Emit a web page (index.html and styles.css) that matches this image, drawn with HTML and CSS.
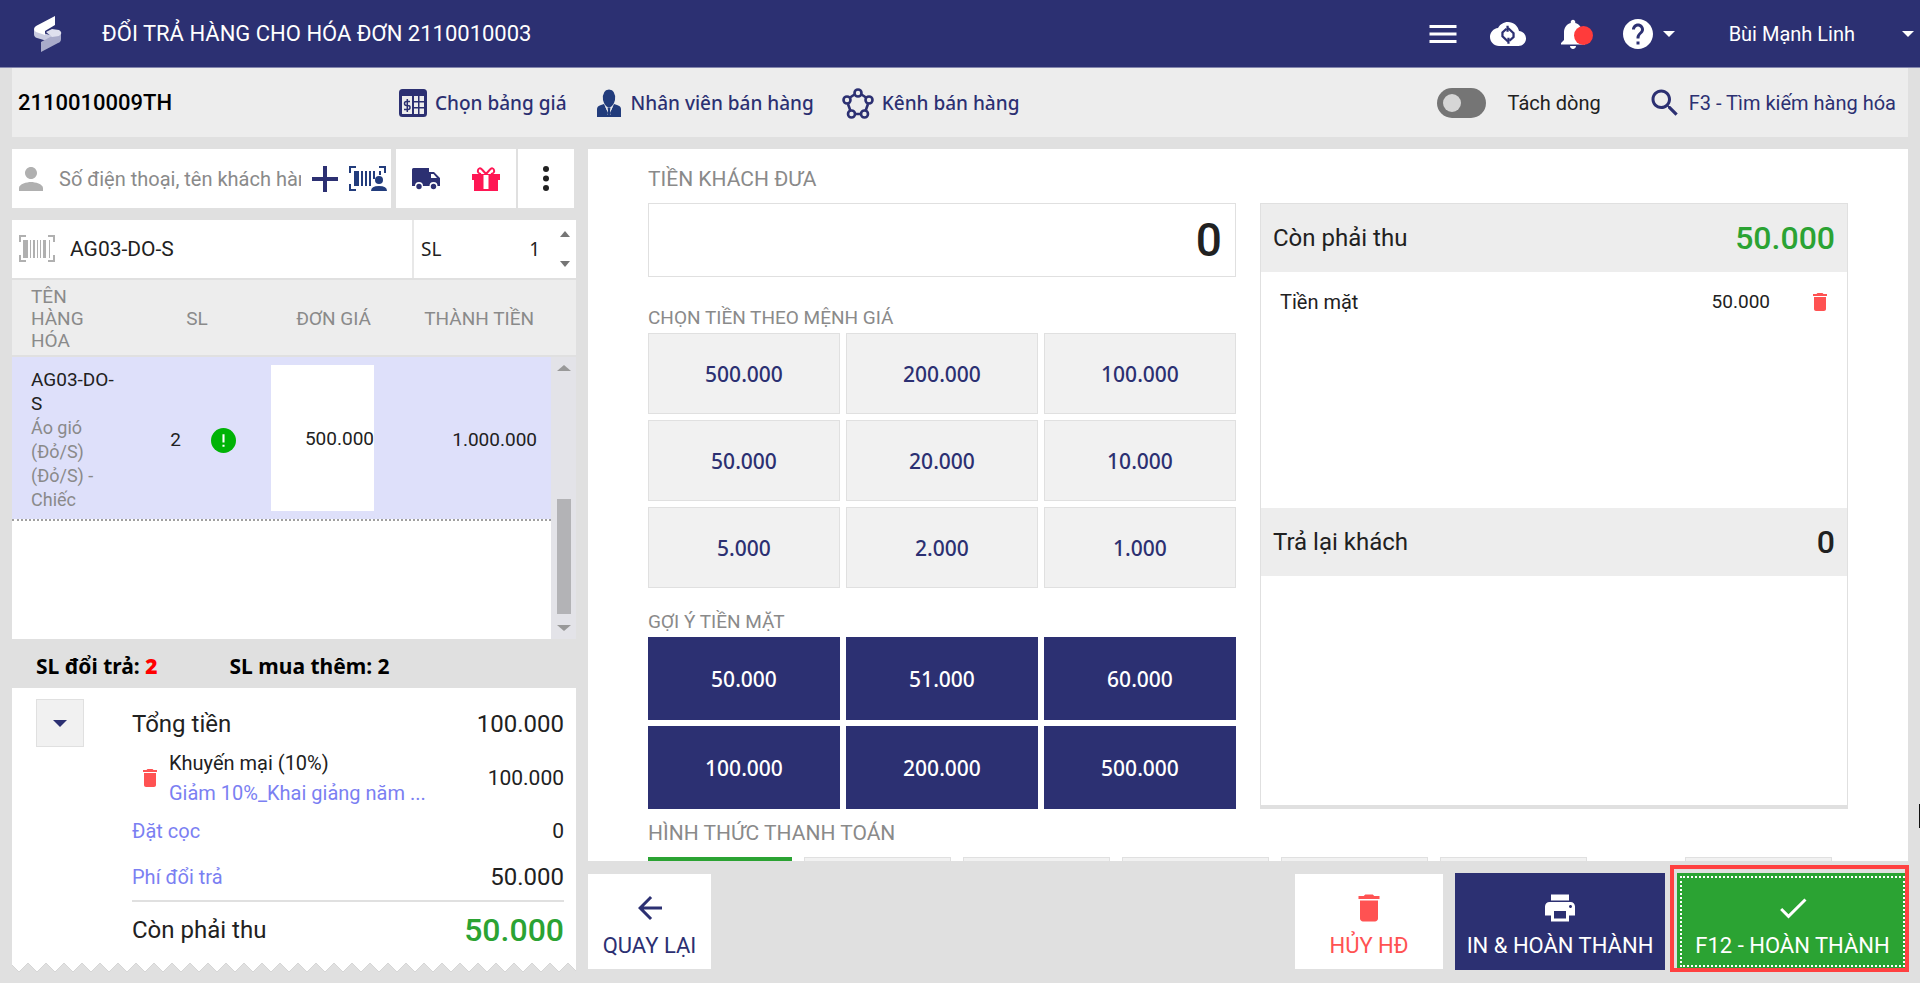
FILE: index.html
```html
<!DOCTYPE html>
<html lang="vi">
<head>
    <meta charset="UTF-8">
    <meta name="viewport" content="width=device-width, initial-scale=1.0">
    <title>Đổi trả hàng</title>
    <link rel="stylesheet" href="styles.css">
</head>
<body>
    <header class="topbar">
        <svg class="logo" viewBox="0 0 28 36">
            <path d="M0 13v5q0 3 3 4l10 3 6-5-10-3z" fill="#c9cbe0"/>
            <path d="M21 0v9l-10 6v4L2 16q-4-3 0-6z" fill="#fff"/>
            <path d="M27 16v7q0 3-3 4L7 36V26l11-6z" fill="#a9abca"/>
            <path d="M12 16l6-3 7 1q3 2 2 4l-2 2-7 1z" fill="#dfe0ee"/>
        </svg>
        <h1>ĐỔI TRẢ HÀNG CHO HÓA ĐƠN 2110010003</h1>
        <div class="topbar-right">
            <button class="icon-btn" aria-label="Menu">
                <svg class="icon" viewBox="0 0 24 24"><path d="M3 18h18v-2H3v2zm0-5h18v-2H3v2zm0-7v2h18V6H3z"/></svg>
            </button>
            <button class="icon-btn" aria-label="Đồng bộ">
                <svg class="icon" viewBox="0 0 24 24">
                    <path d="M19.35 10.04C18.67 6.59 15.64 4 12 4 9.11 4 6.6 5.64 5.35 8.04 2.34 8.36 0 10.91 0 14c0 3.31 2.69 6 6 6h13c2.76 0 5-2.24 5-5 0-2.64-2.05-4.78-4.65-4.96z"/>
                    <g fill="none" stroke="#2c3072" stroke-width="1.5"><path d="M11 8.500L8.300 11v2.500L12 17M13 16.500l2.700-2.500v-2.500L12 8"/><path d="M11.700 6.500v4M12.300 14.500v4"/></g>
                </svg>
            </button>
            <button class="icon-btn bell" aria-label="Thông báo">
                <svg class="icon" viewBox="0 0 24 24"><path d="M12 22c1.100 0 2-.9 2-2h-4c0 1.100.9 2 2 2zm6-6v-5c0-3.070-1.640-5.640-4.500-6.320V4c0-.83-.67-1.500-1.500-1.500s-1.500.67-1.500 1.500v.68C7.630 5.360 6 7.920 6 11v5l-2 2v1h16v-1l-2-2z"/></svg>
                <span class="dot"></span>
            </button>
            <button class="icon-btn" aria-label="Trợ giúp">
                <svg class="icon" viewBox="0 0 24 24"><path d="M12 2C6.480 2 2 6.480 2 12s4.480 10 10 10 10-4.480 10-10S17.520 2 12 2zm1 17h-2v-2h2v2zm2.070-7.750l-.9.920C13.450 12.900 13 13.500 13 15h-2v-.5c0-1.100.45-2.100 1.170-2.830l1.240-1.260c.37-.36.59-.86.59-1.410 0-1.100-.9-2-2-2s-2 .9-2 2H8c0-2.210 1.790-4 4-4s4 1.790 4 4c0 .88-.36 1.680-.93 2.250z"/></svg>
                <span class="caret"></span>
            </button>
            <button class="user-btn">Bùi Mạnh Linh <span class="caret"></span></button>
        </div>
    </header>

    <nav class="toolbar">
        <strong class="order-code">2110010009TH</strong>
        <div class="tool-links">
            <button class="tool">
                <svg class="tool-icon" viewBox="0 0 28 28">
                    <rect x="1.500" y="1.500" width="25" height="25" rx="2" fill="none" stroke="currentColor" stroke-width="3"/>
                    <path d="M1 1h26v6H1zM13 7h2v20h-2zM19 7h1.500v20H19zM14 12h12v1.500H14zM14 18h12v1.500H14z"/>
                    <path d="M11 12.500H7.500q-2 0-2 2t2 2h1.500q2 0 2 2t-2 2H5M8.300 10v13" fill="none" stroke="currentColor" stroke-width="1.500"/>
                </svg>
                Chọn bảng giá
            </button>
            <button class="tool">
                <svg class="tool-icon" viewBox="0 0 28 28">
                    <path d="M8 11q-1-10 6-10.500Q21 1 20 11l-1 3q-2 4-5 4.500Q11 18 9 14zM2 28v-8q0-3 4-4l3-1 5 11 5-11 3 1q4 1 4 4v8z" fill="#223c7c"/>
                    <path d="M10 17l4 9 4-9-3 4 .5 5h-3l.5-5z" fill="#ededed"/>
                    <path d="M12.500 18.500h3l-.5 3 .7 3.500-1.700 2-1.700-2 .7-3.500z" fill="#223c7c"/>
                </svg>
                Nhân viên bán hàng
            </button>
            <button class="tool">
                <svg class="tool-icon wide" viewBox="0 0 32 32" fill="none" stroke="currentColor" stroke-width="2.600">
                    <path d="M12.500 7.500L8 10.500M19.500 7.500l4.500 3M6 17l2.500 7M26 17l-2.500 7M13 27h6"/>
                    <circle cx="16" cy="6" r="3.500"/><circle cx="5" cy="13" r="3.500"/><circle cx="27" cy="13" r="3.500"/><circle cx="9.500" cy="27" r="3.500"/><circle cx="22.500" cy="27" r="3.500"/>
                </svg>
                Kênh bán hàng
            </button>
        </div>
        <label class="switch"><input type="checkbox"> Tách dòng</label>
        <button class="find">
            <svg class="icon" viewBox="0 0 24 24"><path d="M15.500 14h-.79l-.28-.27C15.410 12.590 16 11.110 16 9.500 16 5.910 13.090 3 9.500 3S3 5.910 3 9.500 5.910 16 9.500 16c1.610 0 3.090-.59 4.230-1.570l.27.280v.79l5 4.990L20.490 19l-4.990-5zm-6 0C7.010 14 5 11.990 5 9.500S7.010 5 9.500 5 14 7.010 14 9.500 11.990 14 9.500 14z"/></svg>
            F3 - Tìm kiếm hàng hóa
        </button>
    </nav>

    <main class="workspace">
        <section class="cart">
            <div class="customer-row">
                <div class="customer">
                    <svg class="icon" viewBox="0 0 24 24" fill="#b0b0b0"><path d="M12 12c2.210 0 4-1.790 4-4s-1.790-4-4-4-4 1.790-4 4 1.790 4 4 4zm0 2c-2.670 0-8 1.340-8 4v2h16v-2c0-2.660-5.330-4-8-4z"/></svg>
                    <input type="text" aria-label="Khách hàng" placeholder="Số điện thoại, tên khách hàng">
                    <button class="icon-btn" aria-label="Thêm khách hàng">
                        <svg class="plus" viewBox="0 0 26 26"><path d="M11 0h4v11h11v4H15v11h-4V15H0v-4h11z"/></svg>
                    </button>
                    <button class="icon-btn" aria-label="Quét mã khách hàng">
                        <svg class="scan" viewBox="0 0 38 26" fill="#223c7c">
                            <path d="M0 0h7v2H2v5H0zM30 0h7v7h-2V2h-5zM0 18h2v5h5v2H0zM5 5h5v15H5zM12 5h2v15h-2zM16 5h2v15h-2zM20 5h2v15h-2zM24 5h2v8h-2zM30 5h2v4h-2z"/>
                            <circle cx="30" cy="14" r="4"/><path d="M22 25q0-5 8-5t8 5z"/>
                        </svg>
                    </button>
                </div>
                <div class="extras">
                    <button class="icon-btn" aria-label="Giao hàng">
                        <svg class="small-icon" viewBox="0 0 28 22">
                            <path d="M1.500 0H17v4h5l6 6v8h-2.500a4 4 0 0 0-8 0H11a4 4 0 0 0-8 0H0V1.500Q0 0 1.500 0zM19 6v4h6l-3.500-4z" fill-rule="evenodd"/>
                            <circle cx="7" cy="18.500" r="2.700"/><circle cx="21.500" cy="18.500" r="2.700"/>
                        </svg>
                    </button>
                    <button class="icon-btn" aria-label="Khuyến mại">
                        <svg class="small-icon" viewBox="0 0 28 24" fill="#ff1654">
                            <path d="M0 7h28v6h-2v11H2V13H0zM11.500 8h5v14h-5z" fill-rule="evenodd"/>
                            <path d="M14 7L10 2.500Q7 0 6 3t3 4M14 7l4-4.500Q21 0 22 3t-3 4" fill="none" stroke="#ff1654" stroke-width="2"/>
                        </svg>
                    </button>
                </div>
                <button class="more" aria-label="Thêm">
                    <svg class="dots" viewBox="0 0 6 26"><circle cx="3" cy="3" r="3"/><circle cx="3" cy="12.500" r="3"/><circle cx="3" cy="22" r="3"/></svg>
                </button>
            </div>

            <div class="product-row">
                <svg class="barcode" viewBox="0 0 36 28" fill="#b0b0b0">
                    <path d="M0 0h7v2H2v5H0zM29 0h7v7h-2V2h-5zM0 20h2v5h5v2H0zM34 20h2v7h-7v-2h5zM4 5h5v18H4zM11 5h1v18h-1zM14 5h2v18h-2zM18 5h1v18h-1zM21 5h1v18h-1zM24 5h3v18h-3zM30 5h1v18h-1z"/>
                </svg>
                <input class="product" type="text" aria-label="Mã hàng" value="AG03-DO-S">
                <label class="qty">SL <input type="text" value="1"></label>
                <div class="spinner">
                    <button class="arrow up" aria-label="Tăng"></button>
                    <button class="arrow down" aria-label="Giảm"></button>
                </div>
            </div>

            <div class="items">
                <table>
                    <thead>
                        <tr><th class="c-name">TÊN HÀNG HÓA</th><th class="c-qty">SL</th><th class="c-price">ĐƠN GIÁ</th><th class="c-sum">THÀNH TIỀN</th></tr>
                    </thead>
                    <tbody>
                        <tr>
                            <td class="c-name">AG03-DO-S<br><span>Áo gió (Đỏ/S) (Đỏ/S) - Chiếc</span></td>
                            <td class="c-qty">
                                <div class="qty-cell">2
                                    <svg class="info" viewBox="0 0 24 24"><circle cx="12" cy="12" r="12" fill="#00b306"/><path d="M11 6h2v8h-2zM11 16h2v2h-2z" fill="#fff"/></svg>
                                </div>
                            </td>
                            <td class="c-price"><input type="text" aria-label="Đơn giá" value="500.000"></td>
                            <td class="c-sum">1.000.000</td>
                        </tr>
                    </tbody>
                </table>
                <div class="scrollbar">
                    <span class="arrow up"></span>
                    <span class="thumb"></span>
                    <span class="arrow down"></span>
                </div>
            </div>

            <div class="counts"><span>SL đổi trả: <b>2</b></span><span>SL mua thêm: 2</span></div>

            <div class="summary">
                <button class="collapse" aria-label="Thu gọn"><span class="caret"></span></button>
                <div class="lines">
                    <div class="line big"><span>Tổng tiền</span><span>100.000</span></div>
                    <div class="promo">
                        <button class="icon-btn" aria-label="Xóa khuyến mại"><svg class="bin" viewBox="0 0 24 24"><path d="M6 19c0 1.100.9 2 2 2h8c1.100 0 2-.9 2-2V7H6v12zM19 4h-3.500l-1-1h-5l-1 1H5v2h14V4z"/></svg></button>
                        <div class="promo-text">Khuyến mại (10%)<a href="#">Giảm 10%_Khai giảng năm ...</a></div>
                        <span class="mid">100.000</span>
                    </div>
                    <div class="line"><a href="#">Đặt cọc</a><span class="mid">0</span></div>
                    <div class="line"><a href="#">Phí đổi trả</a><span class="large">50.000</span></div>
                    <div class="line big due"><span>Còn phải thu</span><span class="amount">50.000</span></div>
                </div>
            </div>
            <svg class="zigzag" width="100%" height="10">
                <defs>
                    <pattern id="teeth" x="-2" width="18" height="10" patternUnits="userSpaceOnUse">
                        <path d="M0 0h18L9 9z" fill="#fff"/>
                        <path d="M0 0l9 9 9-9" fill="none" stroke="#d6d6d6"/>
                    </pattern>
                </defs>
                <rect width="100%" height="10" fill="url(#teeth)"/>
            </svg>
        </section>

        <section class="checkout">
            <div class="panel">
                <div class="columns">
                    <div class="cash">
                        <label class="caption large-caption" for="given">TIỀN KHÁCH ĐƯA</label>
                        <input class="given" id="given" type="text" value="0">
                        <h2 class="caption">CHỌN TIỀN THEO MỆNH GIÁ</h2>
                        <div class="keys">
                            <button>500.000</button>
                            <button>200.000</button>
                            <button>100.000</button>
                            <button>50.000</button>
                            <button>20.000</button>
                            <button>10.000</button>
                            <button>5.000</button>
                            <button>2.000</button>
                            <button>1.000</button>
                        </div>
                        <h2 class="caption suggest-caption">GỢI Ý TIỀN MẶT</h2>
                        <div class="keys suggest">
                            <button>50.000</button>
                            <button>51.000</button>
                            <button>60.000</button>
                            <button>100.000</button>
                            <button>200.000</button>
                            <button>500.000</button>
                        </div>
                    </div>
                    <div class="receipt">
                        <div class="receipt-head"><span>Còn phải thu</span><span class="amount">50.000</span></div>
                        <div class="receipt-body">
                            <div class="paid">
                                <span>Tiền mặt</span><span class="paid-sum">50.000</span>
                                <button class="icon-btn" aria-label="Xóa"><svg class="bin" viewBox="0 0 24 24"><path d="M6 19c0 1.100.9 2 2 2h8c1.100 0 2-.9 2-2V7H6v12zM19 4h-3.500l-1-1h-5l-1 1H5v2h14V4z"/></svg></button>
                            </div>
                        </div>
                        <div class="receipt-head"><span>Trả lại khách</span><span class="amount change">0</span></div>
                    </div>
                </div>
                <h2 class="caption large-caption methods-caption">HÌNH THỨC THANH TOÁN</h2>
                <div class="methods">
                    <button class="active" aria-label="Tiền mặt"></button>
                    <button aria-label="Thẻ"></button>
                    <button aria-label="Chuyển khoản"></button>
                    <button aria-label="Voucher"></button>
                    <button aria-label="Điểm"></button>
                    <button aria-label="Ví điện tử"></button>
                    <button class="other" aria-label="Khác"></button>
                </div>
            </div>

            <footer class="actions">
                <button class="action back">
                    <svg class="icon" viewBox="0 0 24 24"><path d="M20 11H7.830l5.590-5.590L12 4l-8 8 8 8 1.410-1.410L7.830 13H20v-2z"/></svg>
                    QUAY LẠI
                </button>
                <button class="action cancel">
                    <svg class="icon" viewBox="0 0 24 24"><path d="M6 19c0 1.100.9 2 2 2h8c1.100 0 2-.9 2-2V7H6v12zM19 4h-3.500l-1-1h-5l-1 1H5v2h14V4z"/></svg>
                    HỦY HĐ
                </button>
                <button class="action print">
                    <svg class="icon" viewBox="0 0 24 24"><path d="M19 8H5c-1.660 0-3 1.340-3 3v6h4v4h12v-4h4v-6c0-1.660-1.340-3-3-3zm-3 11H8v-5h8v5zm3-7c-.55 0-1-.45-1-1s.45-1 1-1 1 .45 1 1-.45 1-1 1zm-1-9H6v4h12V3z"/></svg>
                    IN &amp; HOÀN THÀNH
                </button>
                <button class="action finish">
                    <svg class="icon" viewBox="0 0 24 24"><path d="M9 16.200L4.800 12l-1.400 1.400L9 19 21 7l-1.400-1.400L9 16.200z"/></svg>
                    F12 - HOÀN THÀNH
                </button>
            </footer>
        </section>
    </main>
    <span class="edge-mark"></span>
</body>
</html>
```

FILE: styles.css
```css
* {
    box-sizing: border-box;
}

body {
    margin: 0;
    height: 100vh;
    display: flex;
    flex-direction: column;
    overflow: hidden;
    background: #e0e0e0;
    color: #212121;
    font: 20px/24px Roboto, "Noto Sans", sans-serif;
    fill: currentColor;
}

button,
input {
    margin: 0;
    padding: 0;
    border: none;
    border-radius: 0;
    background: none;
    color: inherit;
    font: inherit;
}

button {
    cursor: pointer;
}

input {
    min-width: 0;
    outline: none;
}

a {
    color: #7b7ff2;
    text-decoration: none;
}

h1,
h2 {
    margin: 0;
    font-size: 22px;
    font-weight: 400;
}

svg {
    display: block;
    flex: none;
}

.icon {
    width: 36px;
    height: 36px;
}

.icon-btn {
    display: flex;
    align-items: center;
    gap: 7px;
}

.caret {
    border: 6px solid transparent;
    border-top-color: currentColor;
    border-bottom: none;
}

/* Header */
.topbar {
    display: flex;
    align-items: center;
    height: 68px;
    padding: 0 6px 0 34px;
    border-bottom: 1px solid #8486ad;
    background: #2c3072;
    color: #fff;
}

.logo {
    width: 28px;
    height: 36px;
    margin-right: 40px;
}

.topbar-right {
    display: flex;
    align-items: center;
    gap: 29px;
    margin-left: auto;
}

.bell {
    position: relative;
}

.dot {
    position: absolute;
    left: 19px;
    top: 10px;
    width: 19px;
    height: 19px;
    border-radius: 50%;
    background: #ff3b3b;
}

.user-btn {
    display: flex;
    align-items: center;
    gap: 47px;
    margin-left: 25px;
}

/* Toolbar */
.toolbar {
    display: flex;
    align-items: center;
    height: 69px;
    margin: 0 12px;
    padding: 0 12px 0 6px;
    background: #ededed;
}

.order-code {
    flex: 0 0 381px;
    color: #000;
    font-size: 22px;
    font-weight: 500;
}

.tool-links {
    display: flex;
    gap: 28px;
}

.tool {
    display: flex;
    align-items: center;
    gap: 8px;
    color: #2c3072;
    font-family: "Noto Sans", sans-serif;
    font-size: 19px;
    font-weight: 500;
}

.tool-icon {
    width: 28px;
    height: 28px;
}

.wide {
    width: 32px;
    height: 32px;
}

.switch {
    display: flex;
    align-items: center;
    gap: 22px;
    margin-left: auto;
}

.switch input {
    appearance: none;
    width: 49px;
    height: 30px;
    padding: 6px;
    border-radius: 15px;
    background: #757575;
}

.switch input::before {
    content: "";
    display: block;
    width: 18px;
    height: 18px;
    border-radius: 50%;
    background: #d6d6d6;
}

.find {
    display: flex;
    align-items: center;
    gap: 6px;
    margin-left: 46px;
    color: #2c3072;
}

/* Layout */
.workspace {
    flex: 1;
    min-height: 0;
    display: grid;
    grid-template-columns: 564px 1fr;
    grid-template-rows: 100%;
    gap: 12px;
    padding: 12px 12px 0;
}

.cart {
    display: flex;
    flex-direction: column;
    padding-bottom: 10px;
}

/* Customer */
.customer-row {
    display: flex;
    height: 59px;
    padding-right: 2px;
}

.customer {
    flex: 1;
    min-width: 0;
    display: flex;
    align-items: center;
    padding: 0 4px 0 1px;
    background: #fff;
}

.customer input {
    flex: 1;
    margin: 0 11px 0 10px;
}

.customer input::placeholder {
    color: #8a8a8a;
}

.plus {
    width: 26px;
    height: 26px;
    margin-right: 11px;
    fill: #2c3072;
}

.scan {
    width: 38px;
    height: 26px;
}

.extras {
    display: flex;
    align-items: center;
    gap: 32px;
    margin-left: 5px;
    padding: 0 16px;
    background: #fff;
    color: #2c3072;
}

.small-icon {
    width: 28px;
    height: 24px;
}

.more {
    display: flex;
    align-items: center;
    justify-content: center;
    width: 56px;
    margin-left: 2px;
    background: #fff;
}

.dots {
    width: 6px;
    height: 26px;
}

/* Product search */
.product-row {
    display: flex;
    align-items: center;
    height: 58px;
    margin-top: 12px;
    padding-left: 7px;
    background: #fff;
}

.barcode {
    width: 36px;
    height: 28px;
}

.product {
    flex: 1;
    padding-left: 15px;
    font-size: 21px;
}

.qty {
    display: flex;
    align-items: center;
    align-self: stretch;
    width: 128px;
    padding-left: 7px;
    border-left: 2px solid #e8e8e8;
    font-family: "Noto Sans", sans-serif;
    font-size: 19px;
}

.qty input {
    width: 100%;
    text-align: right;
}

.spinner {
    display: flex;
    flex-direction: column;
    gap: 24px;
    width: 36px;
    align-items: center;
    padding-left: 14px;
}

.arrow {
    width: 0;
    height: 0;
    border: 5px solid transparent;
    color: #757575;
}

.up {
    border-top: none;
    border-bottom: 6px solid currentColor;
}

.down {
    border-bottom: none;
    border-top: 6px solid currentColor;
}

/* Items */
.items {
    flex: 1;
    min-height: 0;
    display: flex;
    align-items: flex-start;
    border-top: 2px solid #e0e0e0;
    background: linear-gradient(#ededed 75px, #fff 75px);
}

table {
    flex: 1;
    table-layout: fixed;
    border-spacing: 0;
    border-bottom: 2px dotted #a0a0a0;
    font-size: 19px;
}

th {
    padding: 6px 0 3px;
    border-bottom: 2px solid #e0e0e0;
    color: #8a8a8a;
    font-weight: 400;
    line-height: 22px;
}

td {
    padding: 11px 0 7px;
    background: #dee0fa;
}

.c-name {
    width: 105px;
    padding-left: 19px;
    text-align: left;
}

.c-name span {
    color: #8a8a8a;
    font-size: 18px;
}

.c-qty {
    width: 148px;
}

th.c-qty {
    padding-left: 12px;
}

.qty-cell {
    display: flex;
    align-items: center;
    justify-content: flex-end;
    gap: 30px;
    padding-right: 29px;
}

.info {
    width: 25px;
    height: 25px;
}

.c-price {
    width: 115px;
    text-align: right;
}

th.c-price {
    padding-right: 9px;
}

td.c-price {
    padding: 8px 6px;
}

td.c-price input {
    display: block;
    width: 100%;
    height: 146px;
    background: #fff;
    text-align: right;
}

.c-sum {
    padding-right: 14px;
    text-align: right;
}

th.c-sum {
    padding-right: 17px;
}

.scrollbar {
    align-self: stretch;
    display: flex;
    flex-direction: column;
    align-items: center;
    justify-content: space-between;
    width: 25px;
    margin-top: 75px;
    padding: 8px 0;
    border-top: 2px solid #e0e0e0;
    background: #e3e3e8;
}

.scrollbar .arrow {
    border-left-width: 7px;
    border-right-width: 7px;
    color: #999;
}

.thumb {
    width: 14px;
    height: 115px;
    margin: auto 0 11px;
    background: #b3b3b6;
}

.counts {
    display: flex;
    align-items: center;
    gap: 72px;
    height: 49px;
    padding: 4px 24px 0;
    color: #000;
    font-family: "Noto Sans", sans-serif;
    font-size: 21px;
    font-weight: 700;
}

.counts b {
    color: #f00;
}

/* Summary */
.summary {
    display: flex;
    align-items: flex-start;
    gap: 48px;
    padding: 11px 12px 5px 24px;
    background: #fff;
}

.collapse {
    display: flex;
    align-items: center;
    justify-content: center;
    width: 48px;
    height: 48px;
    border: 1px solid #e0e0e0;
    background: #f1f1f1;
    color: #2c3072;
}

.collapse .caret {
    border-width: 7px;
    border-bottom: none;
}

.lines {
    flex: 1;
}

.line {
    display: flex;
    align-items: center;
    justify-content: space-between;
    height: 46px;
}

.big,
.large {
    font-size: 24px;
}

.big {
    height: 49px;
}

.promo {
    display: flex;
    align-items: center;
    padding-left: 6px;
    line-height: 30px;
}

.promo-text {
    flex: 1;
    margin-left: 7px;
}

.promo-text a {
    display: block;
}

.mid {
    font-size: 21px;
}

.bin {
    width: 24px;
    height: 24px;
    fill: #ff5252;
}

.due {
    height: 58px;
    border-top: 2px solid #e0e0e0;
}

.amount {
    color: #2ba333;
    font-size: 32px;
    font-weight: 500;
}

.change {
    color: inherit;
}

/* Checkout */
.checkout {
    display: flex;
    flex-direction: column;
    min-width: 0;
}

.panel {
    flex: 1;
    min-height: 0;
    overflow: hidden;
    padding: 18px 60px 0;
    background: #fff;
}

.columns {
    display: grid;
    grid-template-columns: repeat(2, minmax(0, 1fr));
    gap: 24px;
}

.cash {
    display: flex;
    flex-direction: column;
}

.caption {
    margin: 29px 0 3px;
    color: #8a8a8a;
    font-size: 19px;
}

.suggest-caption {
    margin: 22px 0 3px;
}

.large-caption {
    margin: 0 0 12px;
    font-size: 21px;
}

.given {
    height: 74px;
    padding: 0 13px;
    border: 1px solid #e0e0e0;
    font-size: 46px;
    font-weight: 500;
    text-align: right;
}

.keys {
    display: grid;
    grid-template-columns: repeat(3, 1fr);
    gap: 6px;
}

.keys button {
    height: 81px;
    border: 1px solid #e0e0e0;
    background: #f1f1f1;
    color: #2c3072;
    font-family: "Noto Sans", sans-serif;
    font-size: 21px;
    font-weight: 500;
}

.suggest button {
    height: 83px;
    border: none;
    background: #2c3072;
    color: #fff;
}

.receipt {
    display: flex;
    flex-direction: column;
    margin-top: 36px;
    border: 1px solid #e0e0e0;
    border-bottom-width: 4px;
}

.receipt-head {
    display: flex;
    align-items: center;
    justify-content: space-between;
    height: 68px;
    padding: 0 12px;
    background: #ededed;
    font-size: 24px;
}

.receipt-body {
    min-height: 236px;
}

.paid {
    display: flex;
    align-items: center;
    padding: 18px 15px 0 19px;
}

.paid span:first-child {
    flex: 1;
}

.paid-sum {
    font-size: 19px;
}

.paid .icon-btn {
    margin-left: 38px;
}

.methods-caption {
    margin-top: 12px;
}

.methods {
    display: flex;
    gap: 12px;
    padding-right: 16px;
}

.methods button {
    flex: 0 0 147px;
    height: 81px;
    border: 1px solid #e0e0e0;
    background: #f1f1f1;
}

.methods .active {
    flex-basis: 144px;
    border: none;
    background: #2ba333;
}

.methods .other {
    margin-left: auto;
}

/* Actions */
.actions {
    display: flex;
    align-items: center;
    height: 122px;
    padding-bottom: 1px;
}

.action {
    display: flex;
    flex-direction: column;
    align-items: center;
    justify-content: center;
    gap: 8px;
    height: 95px;
    padding-top: 5px;
    background: #fff;
    font-size: 22px;
}

.back {
    width: 123px;
    margin-right: auto;
    color: #2c3072;
}

.cancel {
    width: 148px;
    color: #ff5252;
}

.print {
    width: 210px;
    height: 97px;
    margin: 0 12px;
    background: #2c3072;
    color: #fff;
}

.finish {
    position: relative;
    width: 231px;
    height: 97px;
    background: #2ba333;
    color: #fff;
    outline: 2px dotted #fff;
    outline-offset: -5px;
}

/* Red frame over the confirm button */
.finish::after {
    content: "";
    position: absolute;
    inset: -8px -1px -2px -7px;
    border: 4px solid #ff4141;
}

.edge-mark {
    position: absolute;
    right: 0;
    top: 804px;
    width: 1px;
    height: 24px;
    background: #111;
}
```
